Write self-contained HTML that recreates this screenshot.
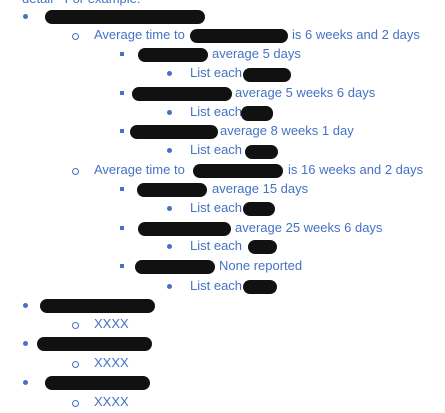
<!DOCTYPE html>
<html><head><style>
body{margin:0;width:445px;height:413px;background:#fff;position:relative;overflow:hidden;font-family:"Liberation Sans",sans-serif;font-size:13px;color:#4472c4}
.t{position:absolute;white-space:nowrap;line-height:16px}
.b{position:absolute;background:#111;border-radius:7px;height:14px;margin-top:-1px}
.d{position:absolute;width:5px;height:5px;border-radius:50%;background:#4472c4}
.o{position:absolute;width:5px;height:5px;border-radius:50%;border:1px solid #4472c4}
.s{position:absolute;width:4px;height:4px;background:#4472c4}
</style></head><body>
<div class="t" style="left:22px;top:-9px">detail - For example:</div>

<div class="d" style="left:23px;top:14px"></div><div class="b" style="left:45px;top:11px;width:160px"></div>

<div class="o" style="left:72px;top:33px"></div><div class="t" style="left:94px;top:27px">Average time to</div><div class="b" style="left:190px;top:30px;width:98px"></div><div class="t" style="left:292px;top:27px">is 6 weeks and 2 days</div>
<div class="s" style="left:120px;top:52px"></div><div class="b" style="left:138px;top:49px;width:70px"></div><div class="t" style="left:212px;top:46px">average 5 days</div>
<div class="d" style="left:167px;top:71px"></div><div class="t" style="left:190px;top:65px">List each</div><div class="b" style="left:243px;top:69px;width:48px"></div>
<div class="s" style="left:120px;top:91px"></div><div class="b" style="left:132px;top:88px;width:100px"></div><div class="t" style="left:235px;top:85px">average 5 weeks 6 days</div>
<div class="d" style="left:167px;top:110px"></div><div class="t" style="left:190px;top:104px">List each</div><div class="b" style="left:241px;top:107px;width:32px;height:15px"></div>
<div class="s" style="left:120px;top:129px"></div><div class="b" style="left:130px;top:126px;width:88px"></div><div class="t" style="left:220px;top:123px">average 8 weeks 1 day</div>
<div class="d" style="left:167px;top:148px"></div><div class="t" style="left:190px;top:142px">List each</div><div class="b" style="left:245px;top:146px;width:33px"></div>

<div class="o" style="left:72px;top:168px"></div><div class="t" style="left:94px;top:162px">Average time to</div><div class="b" style="left:193px;top:165px;width:90px"></div><div class="t" style="left:288px;top:162px">is 16 weeks and 2 days</div>
<div class="s" style="left:120px;top:187px"></div><div class="b" style="left:137px;top:184px;width:70px"></div><div class="t" style="left:212px;top:181px">average 15 days</div>
<div class="d" style="left:167px;top:206px"></div><div class="t" style="left:190px;top:200px">List each</div><div class="b" style="left:243px;top:203px;width:32px"></div>
<div class="s" style="left:120px;top:226px"></div><div class="b" style="left:138px;top:223px;width:93px"></div><div class="t" style="left:235px;top:220px">average 25 weeks 6 days</div>
<div class="d" style="left:167px;top:244px"></div><div class="t" style="left:190px;top:238px">List each</div><div class="b" style="left:248px;top:241px;width:29px"></div>
<div class="s" style="left:120px;top:264px"></div><div class="b" style="left:135px;top:261px;width:80px"></div><div class="t" style="left:219px;top:258px">None reported</div>
<div class="d" style="left:167px;top:284px"></div><div class="t" style="left:190px;top:278px">List each</div><div class="b" style="left:243px;top:281px;width:34px"></div>

<div class="d" style="left:23px;top:303px"></div><div class="b" style="left:40px;top:300px;width:115px"></div>
<div class="o" style="left:72px;top:322px"></div><div class="t" style="left:94px;top:316px">XXXX</div>
<div class="d" style="left:23px;top:341px"></div><div class="b" style="left:37px;top:338px;width:115px"></div>
<div class="o" style="left:72px;top:361px"></div><div class="t" style="left:94px;top:355px">XXXX</div>
<div class="d" style="left:23px;top:380px"></div><div class="b" style="left:45px;top:377px;width:105px"></div>
<div class="o" style="left:72px;top:400px"></div><div class="t" style="left:94px;top:394px">XXXX</div>
</body></html>
